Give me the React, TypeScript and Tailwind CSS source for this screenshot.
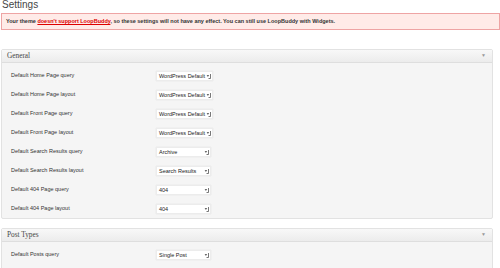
import React from "react";

const generalRows = [
  { label: "Default Home Page query", value: "WordPress Default" },
  { label: "Default Home Page layout", value: "WordPress Default" },
  { label: "Default Front Page query", value: "WordPress Default" },
  { label: "Default Front Page layout", value: "WordPress Default" },
  { label: "Default Search Results query", value: "Archive" },
  { label: "Default Search Results layout", value: "Search Results" },
  { label: "Default 404 Page query", value: "404" },
  { label: "Default 404 Page layout", value: "404" },
];

// second row sits below the fold, only the top of its select shows
const postTypeRows = [
  { label: "Default Posts query", value: "Single Post" },
  { label: "", value: "" },
];

function SelectBox({ value }: { value: string }) {
  return (
    <div className="flex items-center h-[10px] min-w-[55px] bg-white border border-[#ececec] shadow-[0_0_1px_rgba(0,0,0,0.12)] pl-[2px] pr-[1px]">
      <span className="flex-1 whitespace-nowrap text-[5.5px] leading-[10px] text-[#222]">{value}</span>
      <svg width="5" height="7" viewBox="0 0 5 7" className="shrink-0 ml-px">
        <path d="M0.6 3.2 L3.2 3.2 L1.9 4.8 Z" fill="#333" />
        <path d="M4.5 2 L4.5 6.5 L2.5 6.5" stroke="#555" strokeWidth="0.8" fill="none" />
      </svg>
    </div>
  );
}

function Panel({ title, rows }: { title: string; rows: { label: string; value: string }[] }) {
  return (
    <div className="w-[492px] ml-px border border-[#e2e2e2] rounded-[2px] bg-[#f5f5f5]">
      <div className="flex items-center justify-between h-[13px] px-[5px] bg-gradient-to-b from-[#f8f8f8] to-[#ececec] border-b border-[#dedede]">
        <span className="text-[7.3px] text-[#464646]" style={{ fontFamily: '"Liberation Serif", serif' }}>
          {title}
        </span>
        <span className="text-[5px] text-[#999] pr-[1px]">▼</span>
      </div>
      <div className="pt-[3px]">
        {rows.map((r, i) => (
          <div key={i} className="flex items-center h-[19px]">
            <span className="w-[154px] pl-[9px] text-[5.5px] text-[#333]">{r.label}</span>
            <SelectBox value={r.value} />
          </div>
        ))}
      </div>
    </div>
  );
}

export default function App() {
  return (
    <div className="w-[500px] h-[268px] overflow-hidden bg-white" style={{ fontFamily: '"Liberation Sans", Arial, sans-serif' }}>
      <h1 className="pl-[2px] -mt-[1px] h-[14px] text-[10px] leading-[11px] text-[#464646] font-normal">Settings</h1>
      <div className="ml-px h-[17px] flex items-center pl-[4px] bg-[#ffebe8] border border-[#eea4a4] text-[5.5px] font-bold text-[#333]">
        <span>
          Your theme{" "}
          <a className="text-[#d00] underline">doesn&apos;t support LoopBuddy</a>, so these settings will not have any
          effect. You can still use LoopBuddy with Widgets.
        </span>
      </div>
      <div className="h-[19px]" />
      <Panel title="General" rows={generalRows} />
      <div className="h-[9px]" />
      <Panel title="Post Types" rows={postTypeRows} />
    </div>
  );
}
